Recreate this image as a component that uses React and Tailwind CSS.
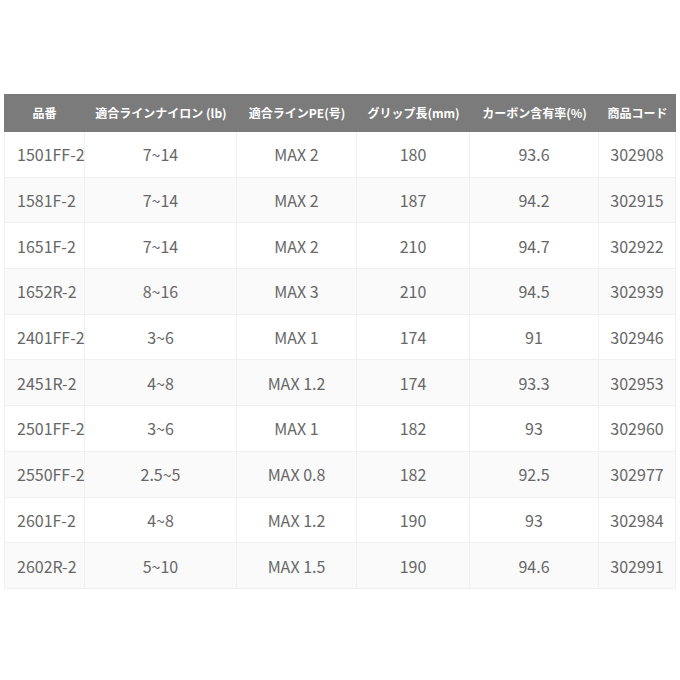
import React from "react";

const rows = [
  ["1501FF-2", "7~14", "MAX 2", "180", "93.6", "302908"],
  ["1581F-2", "7~14", "MAX 2", "187", "94.2", "302915"],
  ["1651F-2", "7~14", "MAX 2", "210", "94.7", "302922"],
  ["1652R-2", "8~16", "MAX 3", "210", "94.5", "302939"],
  ["2401FF-2", "3~6", "MAX 1", "174", "91", "302946"],
  ["2451R-2", "4~8", "MAX 1.2", "174", "93.3", "302953"],
  ["2501FF-2", "3~6", "MAX 1", "182", "93", "302960"],
  ["2550FF-2", "2.5~5", "MAX 0.8", "182", "92.5", "302977"],
  ["2601F-2", "4~8", "MAX 1.2", "190", "93", "302984"],
  ["2602R-2", "5~10", "MAX 1.5", "190", "94.6", "302991"],
];

const headers = [
  "品番",
  "適合ラインナイロン (lb)",
  "適合ラインPE(号)",
  "グリップ長(mm)",
  "カーボン含有率(%)",
  "商品コード",
];

export default function App() {
  return (
    <div
      className="w-[680px] h-[680px] bg-white pt-[94px] pl-[4px]"
      style={{ fontFamily: '"Noto Sans CJK JP", "Noto Sans", sans-serif' }}
    >
      <div className="grid grid-cols-[81px_152px_120px_113px_129px_77px] w-[672px]">
        {headers.map((h, i) => (
          <div
            key={i}
            className="h-[38px] bg-[#7b7b7b] text-white font-bold text-[12px] flex items-center justify-center whitespace-nowrap"
          >
            {h}
          </div>
        ))}
        {rows.map((r, ri) =>
          r.map((c, ci) => (
            <div
              key={ri + "-" + ci}
              className={
                "h-[45.7px] flex items-center whitespace-nowrap text-[16px] text-[#676767] border-b border-r border-[#f0f0f0] " +
                (ri % 2 === 1 ? "bg-[#fafafa] " : "bg-white ") +
                (ci === 0 ? "border-l justify-start pl-[12px] overflow-visible" : "justify-center")
              }
            >
              {c}
            </div>
          ))
        )}
      </div>
    </div>
  );
}
